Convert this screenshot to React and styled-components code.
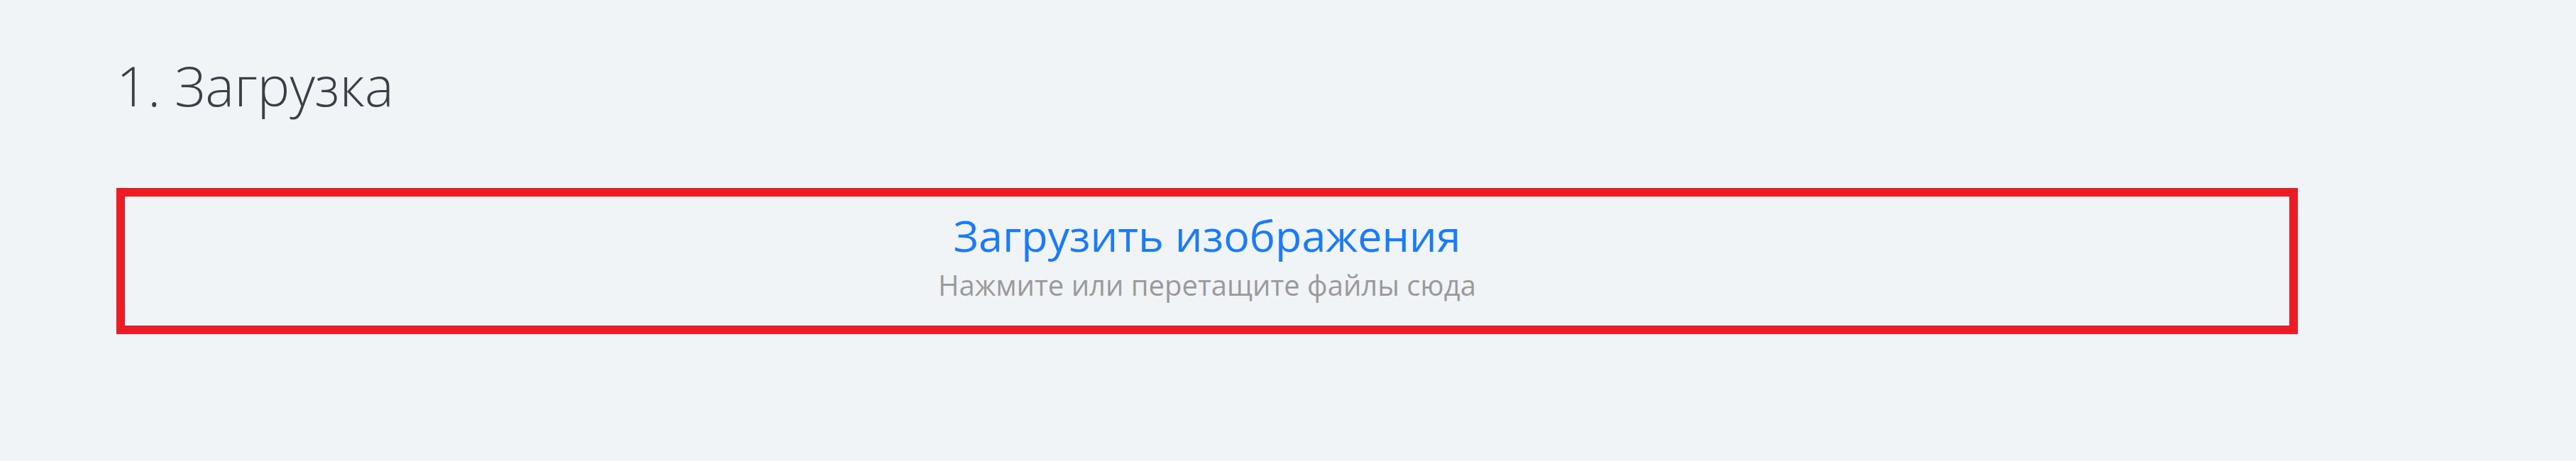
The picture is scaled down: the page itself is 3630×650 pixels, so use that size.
import React from "react";
import styled, { createGlobalStyle } from "styled-components";

const GlobalStyle = createGlobalStyle`
  html, body {
    margin: 0;
    padding: 0;
    background: #f1f4f7;
  }
  body {
    font-family: "Open Sans", "Noto Sans", sans-serif;
  }
`;

const Page = styled.main`
  padding: 71px 0 0 164px;
  width: 3074px;
`;

const Title = styled.h2`
  margin: 0 0 94px 0;
  font-size: 77px;
  font-weight: 300;
  line-height: 100px;
  color: #3b3f45;
`;

const DropZone = styled.div`
  box-sizing: border-box;
  height: 206px;
  padding-top: 15px;
  border: 12px solid #ed1c24;
  display: flex;
  flex-direction: column;
  align-items: center;
  cursor: pointer;
`;

const DropTitle = styled.div`
  font-size: 61px;
  font-weight: 400;
  line-height: 80px;
  color: #1a7bff;
`;

const DropHint = styled.div`
  font-size: 40px;
  font-weight: 400;
  line-height: 60px;
  color: #9a9a9a;
`;

export default function App() {
  return (
    <>
      <GlobalStyle />
      <Page>
        <Title>1. Загрузка</Title>
        <DropZone>
          <DropTitle>Загрузить изображения</DropTitle>
          <DropHint>Нажмите или перетащите файлы сюда</DropHint>
        </DropZone>
      </Page>
    </>
  );
}
